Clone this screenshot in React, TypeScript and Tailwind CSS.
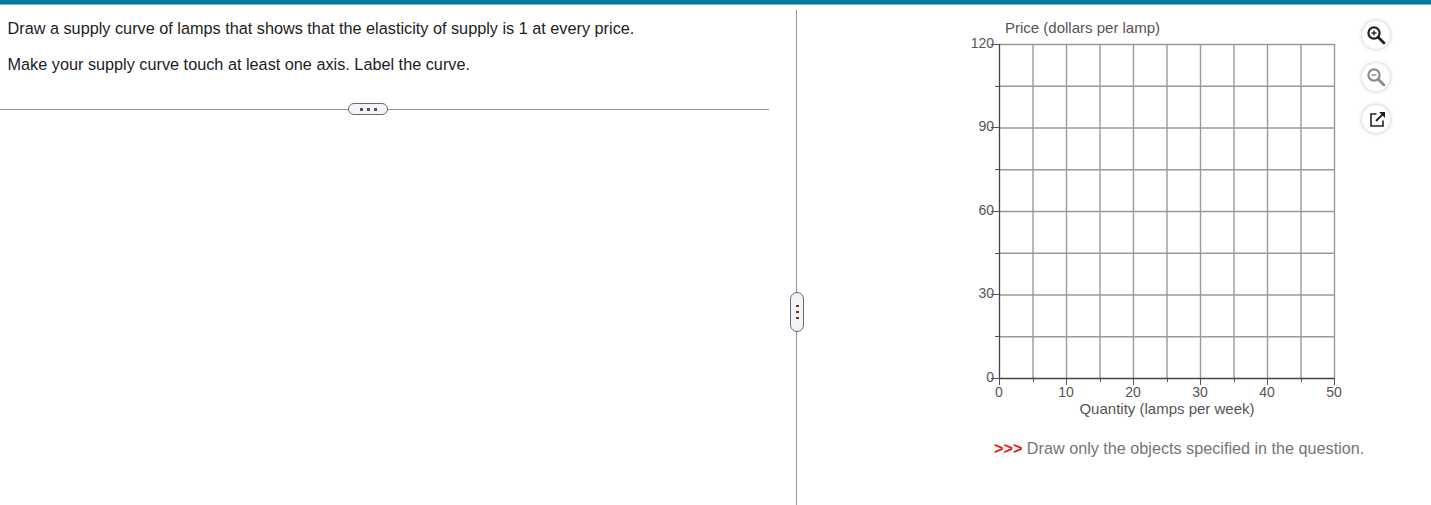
import React, { FC } from "react";

const FONT = "font-['Liberation_Sans',Arial,sans-serif]";

const xTicks = [0, 10, 20, 30, 40, 50];
const yTicks = [0, 30, 60, 90, 120];

const toX = (q: number) => 39 + q * 6.7;
const toY = (p: number) => 34 + (120 - p) * 2.783;

const Chart: FC = () => {
  const xGrid = Array.from({ length: 11 }, (_, i) => i * 5);
  const yGrid = Array.from({ length: 9 }, (_, i) => i * 15);

  return (
    <svg width={390} height={410} className="block shrink-0">
      <text x={45} y={23} fontSize={15} fill="#555">
        Price (dollars per lamp)
      </text>
      {xGrid.slice(1).map((q) => (
        <line key={q} x1={toX(q) + 0.5} x2={toX(q) + 0.5} y1={34} y2={368} stroke="#999" strokeWidth={1.4} />
      ))}
      {yGrid.slice(1).map((p) => (
        <line key={p} x1={39} x2={374} y1={toY(p) + 0.5} y2={toY(p) + 0.5} stroke="#999" strokeWidth={1.4} />
      ))}
      {yGrid.map((p) => (
        <line key={p} x1={p % 30 === 0 ? 31 : 35} x2={39} y1={toY(p) + 0.5} y2={toY(p) + 0.5} stroke="#555" shapeRendering="crispEdges" />
      ))}
      {xGrid.map((q) => (
        <line key={q} x1={toX(q) + 0.5} x2={toX(q) + 0.5} y1={368} y2={q % 10 === 0 ? 375 : 372} stroke="#555" shapeRendering="crispEdges" />
      ))}
      <line x1={39.5} x2={39.5} y1={34} y2={369} stroke="#444" strokeWidth={1.3} />
      <line x1={39} x2={374} y1={368.5} y2={368.5} stroke="#444" strokeWidth={1.3} />
      {yTicks.map((p) => (
        <text key={p} x={34} y={toY(p) + 4} fontSize={14} fill="#555" textAnchor="end">
          {p}
        </text>
      ))}
      {xTicks.map((q) => (
        <text key={q} x={toX(q)} y={387} fontSize={14} fill="#555" textAnchor="middle">
          {q}
        </text>
      ))}
      <text x={207} y={404} fontSize={15} fill="#555" textAnchor="middle">
        Quantity (lamps per week)
      </text>
    </svg>
  );
};

const ZoomButton: FC<{ mode: "in" | "out" | "open" }> = ({ mode }) => {
  const stroke = mode === "out" ? "#8c8c8c" : "#222";

  return (
    <div className="flex h-[28px] w-[28px] items-center justify-center rounded-full bg-white shadow-[0_0_4px_rgba(0,0,0,0.25)]">
      <svg width={20} height={20} viewBox="0 0 20 20" fill="none" stroke={stroke}>
        {mode === "open" ? (
          <>
            <path d="M10.5 5H5v12h12v-5.5" strokeWidth={1.6} />
            <path d="M10 12L17.5 4.5" strokeWidth={1.8} />
            <path d="M13 3h6v6z" fill={stroke} stroke="none" />
          </>
        ) : (
          <>
            <circle cx={8} cy={8} r={5.6} strokeWidth={2.2} />
            <path d="M12.2 12.2L18 18" strokeWidth={2.8} strokeLinecap="round" />
            <path d="M5.5 8h5" strokeWidth={1.4} />
            {mode === "in" && <path d="M8 5.5v5" strokeWidth={1.4} />}
          </>
        )}
      </svg>
    </div>
  );
};

const App: FC = () => {
  return (
    <div className={`${FONT} h-[505px] w-full overflow-hidden bg-white`}>
      <div className="h-[5px] border-b border-[#7fb8cc] bg-[#00789e]" />
      <div className="flex h-[500px] pt-[5px]">
        <div className="w-[796px] shrink-0">
          <div className="pr-[27px]">
            <div className="pl-[7.5px] text-[16.25px] leading-[36px] text-[#1c1c1c]">
              <p>Draw a supply curve of lamps that shows that the elasticity of supply is 1 at every price.</p>
              <p>Make your supply curve touch at least one axis. Label the curve.</p>
            </div>
            <div className="relative mt-[27px] h-px bg-[#8b949e]">
              <div className="absolute left-[348px] top-[-6px] flex h-[12px] w-[40px] items-center justify-center gap-[4px] rounded-[6px] border border-[#5d6b7a] bg-[#f3f4f6]">
                <span className="h-[3px] w-[3px] bg-[#555]" />
                <span className="h-[3px] w-[3px] bg-[#555]" />
                <span className="h-[3px] w-[3px] bg-[#555]" />
              </div>
            </div>
          </div>
        </div>
        <div className="relative w-px shrink-0 bg-[#8b97a3]">
          <div className="absolute left-[-6px] top-[282px] flex h-[40px] w-[14px] flex-col items-center justify-center gap-[4px] rounded-[7px] border border-[#5d6b7a] bg-[#f3f4f6]">
            <span className="h-[2px] w-[3px] bg-[#7a3030]" />
            <span className="h-[2px] w-[3px] bg-[#7a3030]" />
            <span className="h-[2px] w-[3px] bg-[#7a3030]" />
          </div>
        </div>
        <div className="flex-1 pl-[163px]">
          <div className="flex">
            <Chart />
            <div className="ml-[12px] mt-[11px] flex flex-col gap-[14px]">
              <ZoomButton mode="in" />
              <ZoomButton mode="out" />
              <ZoomButton mode="open" />
            </div>
          </div>
          <p className="ml-[34px] mt-[18px] text-[16.2px] leading-[20px] text-[#757575]">
            <span className="font-bold text-[#ee1111]">&gt;&gt;&gt;</span> Draw only the objects specified in the question.
          </p>
        </div>
      </div>
    </div>
  );
};

export default App;
